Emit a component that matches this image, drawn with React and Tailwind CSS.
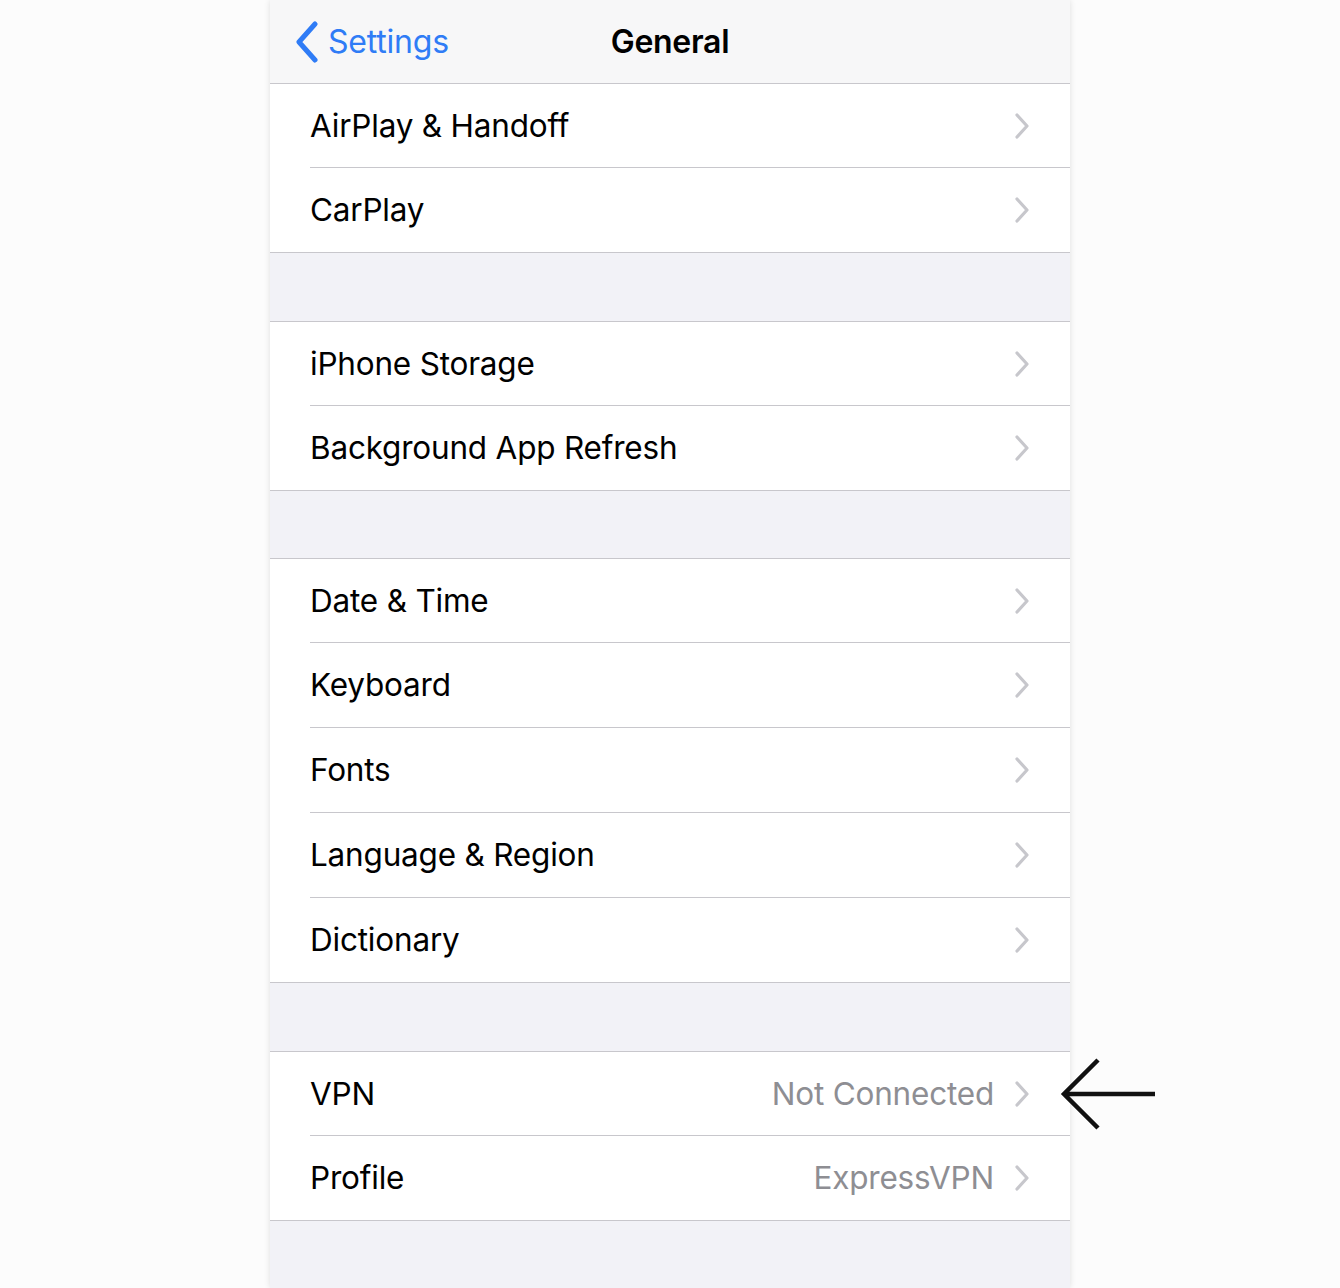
import React from 'react';

const Chevron = () => (
  <svg width="16" height="28" viewBox="0 0 16 28" className="shrink-0">
    <path d="M3 3 L13 14 L3 25" fill="none" stroke="#c7c7cc" strokeWidth="3.2" strokeLinecap="round" strokeLinejoin="round" />
  </svg>
);

const Row = ({ label, value, first, last }) => (
  <div className="pl-10 bg-white">
    <div className={`${first ? 'h-[83px]' : 'h-[84px]'} flex items-center pr-10 ${last ? '' : 'border-b border-[#c8c7cc] box-content'}`}>
      <span className="flex-1 text-[31.5px] text-black tracking-[-0.2px]">{label}</span>
      {value && <span className="text-[31.5px] text-[#8e8e93] mr-5 tracking-[-0.2px]">{value}</span>}
      <Chevron />
    </div>
  </div>
);

const Section = ({ rows, noTop }) => (
  <div className={`${noTop ? '' : 'border-t'} border-b border-[#c8c7cc] bg-white`}>
    {rows.map((r, i) => (
      <Row key={r.label} label={r.label} value={r.value} first={i === 0} last={i === rows.length - 1} />
    ))}
  </div>
);

const App = () => {
  const sections = [
    [{ label: 'AirPlay & Handoff' }, { label: 'CarPlay' }],
    [{ label: 'iPhone Storage' }, { label: 'Background App Refresh' }],
    [
      { label: 'Date & Time' },
      { label: 'Keyboard' },
      { label: 'Fonts' },
      { label: 'Language & Region' },
      { label: 'Dictionary' },
    ],
    [
      { label: 'VPN', value: 'Not Connected' },
      { label: 'Profile', value: 'ExpressVPN' },
    ],
  ];
  const gaps = ['', 'mt-[68px]', 'mt-[67px]', 'mt-[68px]'];

  return (
    <div className="w-[1340px] h-[1288px] bg-[#fcfcfc] overflow-hidden relative" style={{ fontFamily: 'Inter, "Noto Sans", sans-serif' }}>
      <div className="w-[800px] ml-[270px] h-full bg-[#f2f2f7] shadow-[0_0_6px_rgba(0,0,0,0.12)] flex flex-col">
        {/* Nav bar */}
        <div className="h-[84px] shrink-0 bg-[#f7f7f8] border-b border-[#c8c7cc] relative flex items-center">
          <div className="flex items-center pl-[24px]">
            <svg width="26" height="42" viewBox="0 0 26 42">
              <path d="M21 3 L5 21 L21 39" fill="none" stroke="#2f7cf6" strokeWidth="5" strokeLinecap="round" strokeLinejoin="round" />
            </svg>
            <span className="ml-[8px] text-[32px] text-[#2f7cf6] tracking-[-0.2px]">Settings</span>
          </div>
          <span className="absolute left-1/2 -translate-x-1/2 text-[32px] font-semibold text-black tracking-[-0.3px]">General</span>
        </div>

        {sections.map((rows, i) => (
          <div key={i} className={gaps[i]}>
            <Section rows={rows} noTop={i === 0} />
          </div>
        ))}
      </div>

      {/* Pointer arrow */}
      <svg className="absolute left-[1058px] top-[1056px]" width="100" height="78" viewBox="0 0 100 78">
        <path d="M97 38 L6 38 M40 4 L6 38 L40 72" fill="none" stroke="#111" strokeWidth="4.5" />
      </svg>
    </div>
  );
};

export default App;
